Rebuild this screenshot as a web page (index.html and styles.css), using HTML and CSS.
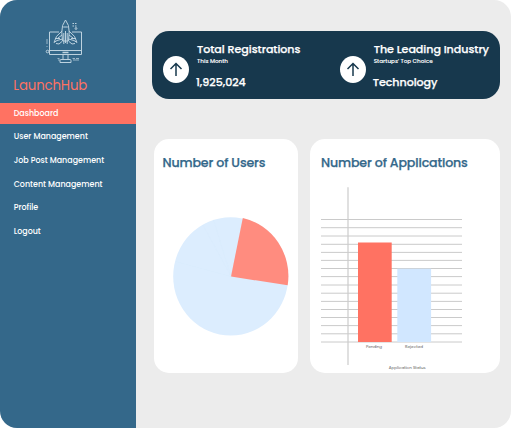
FILE: index.html
```html
<!DOCTYPE html>
<html lang="en">
<head>
<meta charset="utf-8">
<title>LaunchHub</title>
<link rel="stylesheet" href="styles.css">
</head>
<body>
<div class="app">
  <aside class="sidebar">
    <svg class="logo" viewBox="0 0 40 46" fill="none" stroke="#bdd2df" stroke-width="1">
      <path d="M14 14H4.500V36.500H36.500V14H27M4.500 32.500H36.500"/>
      <path d="M17.500 34.500H23.500" stroke-width="1.500"/>
      <path d="M18 36.500V41M23 36.500V41M15 44.500V42.500Q15 41.500 16 41.500H25Q26 41.500 26 42.500V44.500Z"/>
      <path d="M20.500 2Q16.500 7 16.800 14L17.500 23H23.500L24.200 14Q24.500 7 20.500 2ZM18.200 9H22.800M20.500 13V25M18.800 15V26M22.200 15V26"/>
      <path d="M17 13Q10 18 9 24.500L12 22.500L17.500 21M24 13Q31 18 32 24.500L29 22.500L23.500 21M10 20.500H15M26 20.500H31M11 25.500Q14 27.500 17 23.500M30 25.500Q27 27.500 24 23.500M17 17L13 20M24 17L28 20"/>
      <path d="M27.500 5.500H29M30 5.500H31.500M27.500 8H29M30 8H31.500" stroke-width="1"/>
      <circle cx="31" cy="10.500" r=".9"/><circle cx="2.500" cy="33.500" r="1.300"/>
      <path d="M2 21V26M2 28V29M12.500 40.500H14.500M13 42H15M27.500 40.500H30M31 40.500H34M28 42H34" opacity=".75"/>
    </svg>
    <div class="brand">LaunchHub</div>
    <nav class="menu">
      <a class="item active">Dashboard</a>
      <a class="item">User Management</a>
      <a class="item">Job Post Management</a>
      <a class="item">Content Management</a>
      <a class="item">Profile</a>
      <a class="item">Logout</a>
    </nav>
  </aside>
  <main class="main">
    <section class="banner">
      <div class="stat">
        <svg class="arrow" viewBox="0 0 26 27"><ellipse cx="13" cy="13.500" rx="13" ry="13.500" fill="#fff"/><path d="M13 20V7.500M7.500 13L13 7.500L18.500 13" fill="none" stroke="#17384d" stroke-width="1.500"/></svg>
        <div class="info">
          <h2>Total Registrations</h2>
          <p>This Month</p>
          <strong>1,925,024</strong>
        </div>
      </div>
      <div class="stat">
        <svg class="arrow" viewBox="0 0 26 27"><ellipse cx="13" cy="13.500" rx="13" ry="13.500" fill="#fff"/><path d="M13 20V7.500M7.500 13L13 7.500L18.500 13" fill="none" stroke="#17384d" stroke-width="1.500"/></svg>
        <div class="info">
          <h2>The Leading Industry</h2>
          <p>Startups' Top Choice</p>
          <strong>Technology</strong>
        </div>
      </div>
    </section>
    <div class="cards">
      <section class="card users">
        <h3>Number of Users</h3>
        <svg class="pie" viewBox="0 0 116 119">
          <ellipse cx="57.700" cy="59.400" rx="57.500" ry="59.200" fill="#dcedfe"/>
          <path d="M58 59.500L69.800 1A57.800 59.400 0 0 1 114.700 68.300Z" fill="#ff8c7f"/>
          <path d="M58 59.500L2.500 44.500M58 59.500L30 8M58 59.500L40.500 3" stroke="#d6e9fb" stroke-width=".3"/>
        </svg>
      </section>
      <section class="card applications">
        <h3>Number of Applications</h3>
        <svg class="bars" viewBox="321 187 142 184">
          <path d="M321 219.500H462M321 227.700H462M321 236H462M321 244.300H462M321 252.400H462M321 260.400H462M321 268.500H462M321 276.600H462M321 285H462M321 293.200H462M321 301.400H462M321 309.500H462M321 317.500H462M321 325.600H462M321 333.800H462M321 342H462" stroke="#c4c4c4" stroke-width=".9"/>
          <path d="M348 187.300V365" stroke="#cbcbcb" stroke-width="1.200"/>
          <rect x="358" y="242.500" width="33.700" height="99.500" fill="#ff7262"/>
          <rect x="397.300" y="268.700" width="33.800" height="73.300" fill="#d1e7ff"/>
          <g class="labels">
            <text x="366" y="348.300" textLength="16">Pending</text>
            <text x="405" y="348.300" textLength="18">Rejected</text>
            <text x="388.700" y="368.500" textLength="37">Application Status</text>
          </g>
        </svg>
      </section>
    </div>
  </main>
</div>
</body>
</html>
```
FILE: styles.css
```css
* { box-sizing: border-box; }
body {
  margin: 0;
  background: #fff;
  font-family: Poppins, Inter, "Liberation Sans", sans-serif;
  overflow: hidden;
}
h2, h3, p { margin: 0; }
h2, h3, p, strong, .item { white-space: nowrap; }

.app {
  display: flex;
  width: 511px;
  height: 428px;
  border-radius: 17px;
  overflow: hidden;
  background: #ececec;
}

.sidebar {
  width: 136.300px;
  flex: none;
  background: #34688a;
  color: #fff;
}
.logo {
  display: block;
  width: 40px;
  height: 46px;
  margin: 18px 0 0 45px;
}
.brand {
  margin: 12px 0 0 13.300px;
  height: 18px;
  line-height: 19px;
  font-size: 13.300px;
  letter-spacing: -0.130px;
  color: #ff7262;
}
.menu { margin-top: 9px; }
.item {
  display: flex;
  align-items: center;
  height: 20.500px;
  margin-bottom: 3.200px;
  padding: 0.600px 0 0 13.700px;
  font-size: 7.950px;
  font-weight: 500;
}
.active { background: #ff7262; }

.main {
  flex: 1;
  padding: 31px 0 0 15.700px;
}
.banner {
  display: flex;
  width: 348px;
  height: 68px;
  padding-left: 11px;
  border-radius: 17px;
  background: #17384d;
  color: #fff;
}
.stat { display: flex; flex: none; width: 176.700px; }
.arrow {
  flex: none;
  width: 26px;
  height: 27px;
  margin-top: 24.500px;
}
.info {
  display: flex;
  flex-direction: column;
  align-items: flex-start;
  padding: 11px 0 0 8px;
}
.info h2, .info strong {
  height: 14px;
  line-height: 14px;
  font-size: 11.100px;
  font-weight: 500;
  letter-spacing: -0.040px;
  -webkit-text-stroke: 0.250px currentColor;
}
.info p {
  height: 8px;
  margin-top: 1px;
  line-height: 8px;
  font-size: 5.700px;
  font-weight: 500;
  -webkit-text-stroke: 0.100px currentColor;
}
.info strong { margin: 10px 0 0 -1px; }

.cards {
  display: flex;
  gap: 12px;
  padding: 40px 0 0 2px;
}
.card {
  height: 234.300px;
  border-radius: 15px;
  background: #fff;
}
.users { width: 144px; padding: 15px 0 0 8.500px; }
.applications { width: 190px; padding: 15px 0 0 11px; }
.card h3 {
  height: 17px;
  line-height: 17px;
  font-size: 12.600px;
  font-weight: 500;
  letter-spacing: -0.140px;
  -webkit-text-stroke: 0.250px currentColor;
  color: #34688a;
}
.pie {
  display: block;
  width: 116px;
  height: 119px;
  margin: 46px 0 0 10.700px;
}
.bars {
  display: block;
  width: 142px;
  height: 184px;
  margin-top: 16px;
}
.labels { font-size: 4.100px; fill: #666; }
```
